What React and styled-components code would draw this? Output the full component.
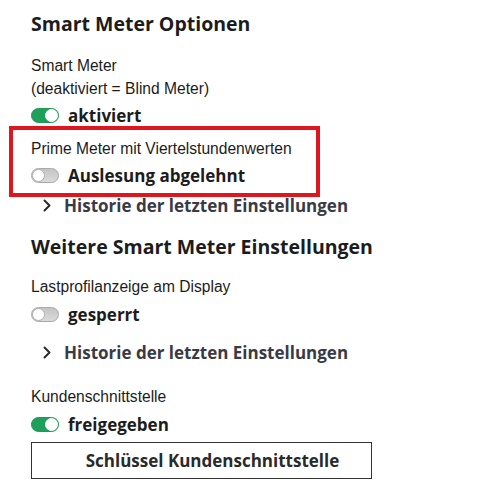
import styled, { createGlobalStyle } from "styled-components";

const GlobalStyle = createGlobalStyle`
  body {
    margin: 0;
    background: #ffffff;
    color: #1c1c1c;
  }
`;

const headFont = `"Open Sans", Lato, sans-serif`;
const bodyFont = `"Liberation Sans", Arial, sans-serif`;

export default function App() {
  return (
    <>
      <GlobalStyle />
      <StPage>
        <StHeading>Smart Meter Optionen</StHeading>

        <StLabel $top={18}>
          Smart Meter
          <br />
          (deaktiviert = Blind Meter)
        </StLabel>
        <Toggle on label="aktiviert" />

        <StHighlight>
          <StLabel $top={0}>Prime Meter mit Viertelstundenwerten</StLabel>
          <Toggle label="Auslesung abgelehnt" />
        </StHighlight>
        <History $top={-1} />

        <StHeading $top={19}>Weitere Smart Meter Einstellungen</StHeading>

        <StLabel $top={16.5}>Lastprofilanzeige am Display</StLabel>
        <Toggle label="gesperrt" $top={5} />
        <History $top={16.5} />

        <StLabel $top={22.5}>Kundenschnittstelle</StLabel>
        <Toggle on label="freigegeben" $top={5} />
        <StButton type="button">Schlüssel Kundenschnittstelle</StButton>
      </StPage>
    </>
  );
}

function Toggle({ on, label, $top }) {
  return (
    <StToggleRow $top={$top}>
      <StSwitch $on={on}>
        <StKnob $on={on} />
      </StSwitch>
      <StToggleText>{label}</StToggleText>
    </StToggleRow>
  );
}

function History({ $top }) {
  return (
    <StHistory $top={$top}>
      <svg width="10" height="13" viewBox="0 0 10 13" fill="none">
        <path d="M2.5 1.5 L7.5 6.5 L2.5 11.5" stroke="#2b2b2b" strokeWidth="2" strokeLinecap="round" strokeLinejoin="round" />
      </svg>
      <span>Historie der letzten Einstellungen</span>
    </StHistory>
  );
}

const StPage = styled.main`
  display: flex;
  flex-direction: column;
  align-items: flex-start;

  padding: 12px 0 0 31px;
  width: 457px;
  box-sizing: border-box;
`;

const StHeading = styled.h2`
  margin: ${({ $top }) => $top || 0}px 0 0;

  font-family: ${headFont};
  font-size: 19.5px;
  font-weight: 700;
  line-height: 24px;
  color: #1c1c1c;
`;

const StLabel = styled.p`
  margin: ${({ $top }) => $top}px 0 0;

  font-family: ${bodyFont};
  font-size: 15.6px;
  line-height: 23px;
  color: #1c1c1c;
`;

const StToggleRow = styled.div`
  display: flex;
  align-items: center;
  gap: 9px;

  margin-top: ${({ $top }) => $top ?? 4}px;
  height: 23px;
`;

const StSwitch = styled.span`
  position: relative;
  display: inline-block;

  border: 1px solid ${({ $on }) => ($on ? "#1e9a55" : "#a9a9a9")};
  border-radius: 8px;
  width: 28px;
  height: 15px;
  box-sizing: border-box;
  background: ${({ $on }) => ($on ? "#1fa05a" : "linear-gradient(#c4c4c4, #dadada)")};
`;

const StKnob = styled.span`
  position: absolute;
  top: 0;
  left: ${({ $on }) => ($on ? "13px" : "0")};

  border: 1px solid ${({ $on }) => ($on ? "#ffffff" : "#b0b0b0")};
  border-radius: 50%;
  width: 13px;
  height: 13px;
  box-sizing: border-box;
  background: #ffffff;
`;

const StToggleText = styled.span`
  font-family: ${headFont};
  font-size: 17px;
  font-weight: 700;
  color: #1c1c1c;
`;

const StHighlight = styled.section`
  display: flex;
  flex-direction: column;
  align-items: flex-start;

  margin: -1.5px 0 0 -22px;
  padding: 7.5px 0 5.5px 18px;
  border: 4px solid #e0161e;
  width: 311px;
  box-sizing: border-box;
`;

const StHistory = styled.button`
  display: flex;
  align-items: center;
  gap: 12px;

  margin-top: ${({ $top }) => $top || 0}px;
  padding: 0 0 0 11px;
  border: none;
  background: none;
  height: 20px;

  font-family: ${headFont};
  font-size: 17px;
  font-weight: 700;
  color: #3a3a44;
`;

const StButton = styled.button`
  margin-top: 5.5px;
  padding: 0 0 0 22px;
  border: 1px solid #333333;
  width: 341px;
  height: 37px;
  background: #ffffff;

  font-family: ${headFont};
  font-size: 17px;
  font-weight: 700;
  color: #2a2a2a;
`;
